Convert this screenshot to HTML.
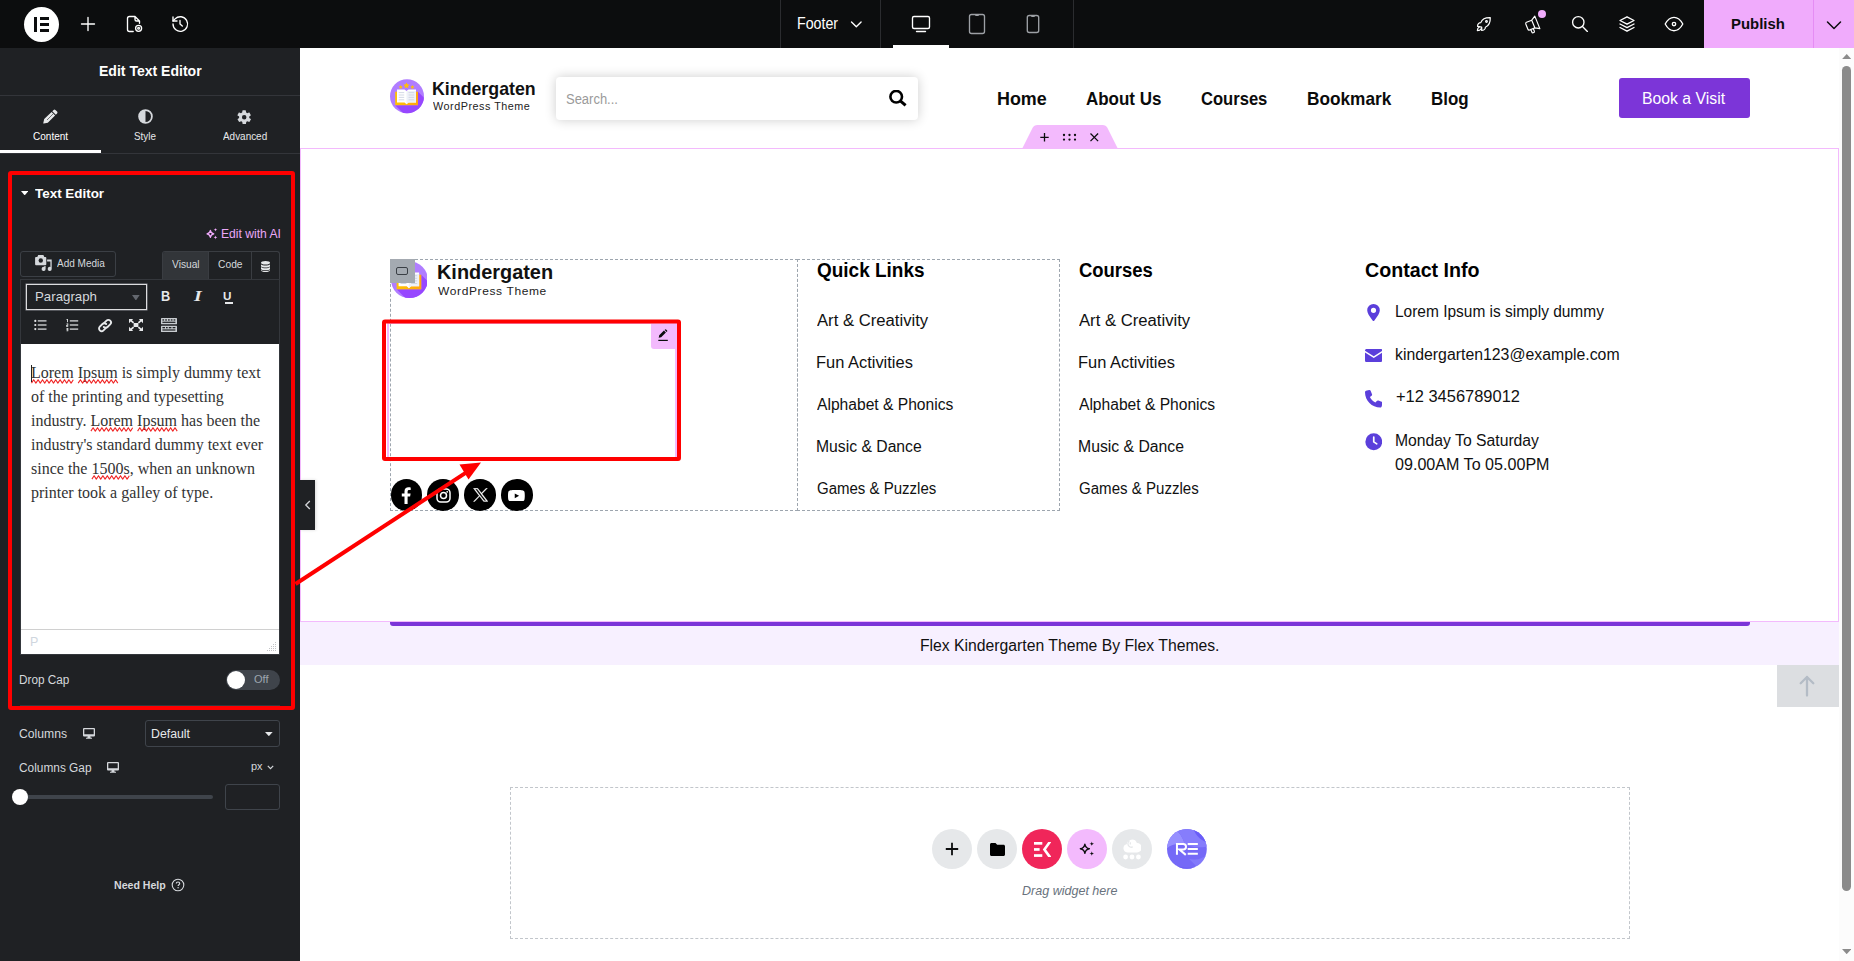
<!DOCTYPE html>
<html lang="en">
<head>
<meta charset="utf-8">
<title>Elementor | Footer</title>
<style>
*{box-sizing:border-box;margin:0;padding:0}
html,body{width:1854px;height:961px;overflow:hidden;background:#fff;font-family:"Liberation Sans",sans-serif}
.abs{position:absolute}
#app{position:relative;width:1854px;height:961px;overflow:hidden}
/* top bar */
#topbar{position:absolute;left:0;top:0;width:1854px;height:48px;background:#0c0d0e;color:#fff}
#topbar .sep{position:absolute;top:0;width:1px;height:48px;background:#2b2c2f}
#topbar svg{position:absolute;overflow:visible}
.tb-ic{fill:none;stroke:#fff;stroke-width:1.35;stroke-linecap:round;stroke-linejoin:round}
/* panel */
#panel{position:absolute;left:0;top:48px;width:300px;height:913px;background:#1f2124;color:#fff}
#panel .hline{position:absolute;left:0;width:300px;height:1px;background:#33353a}
.tablabel{position:absolute;top:82px;font-size:12px;line-height:14px;color:#e6e8ea;white-space:nowrap;transform-origin:0 0}
.lbl{position:absolute;font-size:12px;line-height:14px;color:#d5d8dc;white-space:nowrap;transform-origin:0 50%}
/* preview */
#preview{position:absolute;left:300px;top:48px;width:1554px;height:913px;background:#fff;overflow:hidden}
.lato{font-family:"Liberation Sans",sans-serif}
.t{position:absolute;white-space:nowrap;transform-origin:0 50%}
.sp{}
.nav{top:38px;font-size:18px;line-height:24px;font-weight:bold;color:#0b0b0b}
.fh{top:209px;font-size:20px;line-height:26px;font-weight:bold;color:#000}
.fl{font-size:16px;line-height:22px;color:#111}
.soc{position:absolute;top:431.200px;width:31.500px;height:31.500px;border-radius:50%;background:#000}
.cb{position:absolute;top:781px;width:40px;height:40px;border-radius:50%}
</style>
</head>
<body>
<div id="app">

<!-- ================= TOP BAR ================= -->
<div id="topbar">
  <!-- elementor logo -->
  <div class="abs" style="left:24px;top:7px;width:35px;height:35px;border-radius:50%;background:#fff"></div>
  <div class="abs" style="left:34px;top:17px;width:3px;height:14.5px;background:#0c0d0e"></div>
  <div class="abs" style="left:40px;top:17px;width:9px;height:3px;background:#0c0d0e"></div>
  <div class="abs" style="left:40px;top:22.7px;width:9px;height:3px;background:#0c0d0e"></div>
  <div class="abs" style="left:40px;top:28.5px;width:9px;height:3px;background:#0c0d0e"></div>
  <!-- plus -->
  <svg class="tb-ic" style="left:76px;top:12px" width="24" height="24" viewBox="0 0 24 24"><path d="M12 5.5v13M5.5 12h13"/></svg>
  <!-- doc settings -->
  <svg class="tb-ic" style="left:122px;top:12px" width="24" height="24" viewBox="0 0 24 24"><path d="M13 4.5H7.5a2 2 0 0 0-2 2v11a2 2 0 0 0 2 2h3.7M13 4.500l4.500 4.500v2.200M13 4.500v3a1.500 1.500 0 0 0 1.500 1.500h3"/><circle cx="16.600" cy="16.300" r="3"/><circle cx="16.600" cy="16.300" r="0.900"/></svg>
  <!-- history -->
  <svg class="tb-ic" style="left:168px;top:12px" width="24" height="24" viewBox="0 0 24 24"><path d="M5 12a7.300 7.300 0 1 0 2.100-5.100L5 9"/><path d="M5 5v4h4"/><path d="M12 8.500V12l2.300 2"/></svg>

  <div class="sep" style="left:780px"></div>
  <div class="sep" style="left:880px"></div>
  <div class="sep" style="left:1073px"></div>
  <div class="t" id="tb-footer" style="left:797.09px;top:14.00px;font-size:16.00px;line-height:20px;color:#fff;transform:scaleX(0.8888);transform-origin:0 50%">Footer</div>
  <svg class="tb-ic" style="left:846px;top:14px" width="20" height="20" viewBox="0 0 20 20"><path d="M5.500 8l4.800 4.800L15.100 8"/></svg>
  <!-- desktop -->
  <svg class="tb-ic" style="left:909px;top:12px" width="24" height="24" viewBox="0 0 24 24"><rect x="3.500" y="4.500" width="17" height="12" rx="1.500"/><path d="M7.500 19.500h9"/></svg>
  <div class="abs" style="left:893px;top:45px;width:56px;height:3px;background:#fff"></div>
  <!-- tablet -->
  <svg class="tb-ic" style="left:965px;top:12px;stroke:#9da0a5" width="24" height="24" viewBox="0 0 24 24"><rect x="4.500" y="2.500" width="15" height="19" rx="2"/><path d="M10.800 3.200h2.400"/></svg>
  <!-- mobile -->
  <svg class="tb-ic" style="left:1021px;top:12px;stroke:#9da0a5" width="24" height="24" viewBox="0 0 24 24"><rect x="6.300" y="3.500" width="11.400" height="17" rx="2"/><path d="M10.800 4.200h2.400"/></svg>

  <!-- rocket -->
  <svg class="tb-ic" style="left:1472px;top:12px" width="24" height="24" viewBox="0 0 24 24"><g transform="translate(12 12) scale(.92) translate(-12 -12)"><path d="M5 14.500c0-2 1.500-4 3.500-4 1-2.500 4-5.500 10.300-5.300.2 6.300-2.800 9.300-5.300 10.300 0 2-2 3.500-4 3.500v-3.500L5 14.500z"/><circle cx="14.700" cy="9.300" r="0.900"/><path d="M6.800 15.200c-1.500.8-2 2.500-2 4 1.500 0 3.200-.5 4-2"/></g></svg>
  <!-- megaphone -->
  <svg class="tb-ic" style="left:1520px;top:12px" width="24" height="24" viewBox="0 0 24 24"><g transform="translate(12 12.300) scale(.87) rotate(-22) translate(-12 -12)"><path d="M13.500 7.500v9.500M13.500 7.500l5-3v15.500l-5-3M13.500 7.500H7a1.500 1.500 0 0 0-1.500 1.500v6.500A1.500 1.500 0 0 0 7 17h6.500M8.500 17v3.500a1 1 0 0 0 1 1h1a1 1 0 0 0 1-1V17"/></g></svg>
  <div class="abs" style="left:1538px;top:10px;width:8px;height:8px;border-radius:50%;background:#f0abfc"></div>
  <!-- search -->
  <svg class="tb-ic" style="left:1568px;top:12px" width="24" height="24" viewBox="0 0 24 24"><circle cx="10.300" cy="10.300" r="5.700"/><path d="M14.500 14.500L19.400 19.400"/></svg>
  <!-- layers -->
  <svg class="tb-ic" style="left:1615px;top:12px" width="24" height="24" viewBox="0 0 24 24"><path d="M12 4.800l7 3.700-7 3.700-7-3.700 7-3.700z"/><path d="M5 12l7 3.700 7-3.700"/><path d="M5 15.500l7 3.700 7-3.700"/></svg>
  <!-- eye -->
  <svg class="tb-ic" style="left:1662px;top:12px" width="24" height="24" viewBox="0 0 24 24"><path d="M3.200 12c2.400-4.500 5.300-6.700 8.800-6.700s6.400 2.200 8.800 6.700c-2.400 4.500-5.300 6.700-8.800 6.700S5.600 16.500 3.200 12z"/><circle cx="12" cy="12" r="1.700"/></svg>
  <!-- publish -->
  <div class="abs" style="left:1704px;top:0;width:150px;height:48px;background:#f0abfc"></div>
  <div class="abs" style="left:1813px;top:0;width:1px;height:48px;background:#e58df4"></div>
  <div class="t" id="tb-publish" style="left:1731.27px;top:14.01px;font-size:15.50px;line-height:20px;font-weight:bold;color:#0c0d0e;transform:scaleX(0.9611);transform-origin:0 50%">Publish</div>
  <svg style="left:1822px;top:14px;fill:none;stroke:#0c0d0e;stroke-width:1.500;stroke-linecap:round;stroke-linejoin:round" width="24" height="24" viewBox="0 0 24 24"><path d="M5.500 8l6.500 6.500L18.500 8"/></svg>
</div>

<!-- ================= PANEL ================= -->
<div id="panel">
<!--PANEL-START-->
  <!-- header -->
  <div class="t" id="p-title" style="left:98.54px;top:13.01px;font-size:15.00px;line-height:20px;font-weight:bold;color:#fff;transform:scaleX(0.9355);transform-origin:0 50%">Edit Text Editor</div>
  <div class="hline" style="top:47px"></div>
  <!-- tabs -->
  <svg class="abs" style="left:43px;top:61px" width="15" height="15" viewBox="0 0 15 15"><path fill="#e6e8ea" d="M10.600.9a1.300 1.300 0 0 1 1.800 0l1.700 1.700a1.300 1.300 0 0 1 0 1.800l-1.300 1.300-3.500-3.500 1.300-1.300zM8.600 2.900l3.500 3.500-7.300 7.300-4 .9a.400.400 0 0 1-.5-.5l.9-4 7.400-7.200z"/><path stroke="#1f2124" stroke-width=".6" d="M4 11l6-6"/></svg>
  <svg class="abs" style="left:138px;top:61px" width="15" height="15" viewBox="0 0 15 15"><circle cx="7.500" cy="7.500" r="6.400" fill="none" stroke="#d5d8dc" stroke-width="1.800"/><path fill="#d5d8dc" d="M7.500.9a6.600 6.600 0 0 0 0 13.200z"/></svg>
  <svg class="abs" style="left:236.300px;top:60.500px" width="16.400" height="16.400" viewBox="0 0 24 24"><path fill="#d5d8dc" d="M19.400 13a7.600 7.600 0 0 0 0-2l2.100-1.600a.500.500 0 0 0 .1-.7l-2-3.400a.500.500 0 0 0-.6-.2l-2.500 1a7.300 7.300 0 0 0-1.700-1l-.4-2.600a.500.500 0 0 0-.5-.5h-4a.500.500 0 0 0-.5.500l-.4 2.600a7.300 7.300 0 0 0-1.700 1l-2.500-1a.500.500 0 0 0-.6.200l-2 3.400a.500.500 0 0 0 .1.700L4.600 11a7.600 7.600 0 0 0 0 2l-2.100 1.600a.500.500 0 0 0-.1.700l2 3.400c.1.200.4.300.6.200l2.500-1c.5.400 1.100.7 1.700 1l.4 2.600c0 .3.200.5.500.5h4c.3 0 .5-.2.500-.5l.4-2.600c.6-.300 1.200-.600 1.700-1l2.500 1c.2.100.5 0 .6-.2l2-3.400a.500.500 0 0 0-.1-.7L19.400 13zM12 15.300a3.300 3.300 0 1 1 0-6.600 3.300 3.300 0 0 1 0 6.600z"/></svg>
  <div class="tablabel" id="p-tab1" style="left:32.65px;color:#fff;font-size:11.50px;line-height:20px;top:78.01px;transform:scaleX(0.8720);transform-origin:0 50%">Content</div>
  <div class="tablabel" id="p-tab2" style="left:134.32px;font-size:11.50px;line-height:20px;top:78.01px;transform:scaleX(0.8571);transform-origin:0 50%">Style</div>
  <div class="tablabel" id="p-tab3" style="left:223.20px;font-size:11.50px;line-height:20px;top:78.01px;transform:scaleX(0.8634);transform-origin:0 50%">Advanced</div>
  <div class="abs" style="left:0;top:102px;width:101px;height:3px;background:#fff"></div>
  <div class="hline" style="top:105px"></div>

  <!-- section title -->
  <svg class="abs" style="left:21px;top:142.700px" width="7.400" height="4.400" viewBox="0 0 7.400 4.400"><path fill="#fff" d="M0 0h7.400L3.700 4.400z"/></svg>
  <div class="t" id="p-sect" style="left:34.80px;top:136.00px;font-size:13.00px;line-height:20px;font-weight:bold;color:#fff;transform:scaleX(1.0322);transform-origin:0 50%">Text Editor</div>

  <!-- edit with AI -->
  <svg class="abs" style="left:206px;top:179.500px" width="12" height="12" viewBox="0 0 12 12"><path fill="none" stroke="#f0abfc" stroke-width="1.250" stroke-linejoin="round" d="M4.400 2.300c.35 2.300 1.100 3.100 3.400 3.500-2.300.4-3.050 1.200-3.400 3.500-.35-2.300-1.100-3.100-3.400-3.500 2.300-.4 3.050-1.200 3.400-3.500z"/><path fill="#f0abfc" d="M9.500-.2c.2 1.300.6 1.700 1.900 1.900-1.300.2-1.700.6-1.900 1.900-.2-1.300-.6-1.700-1.900-1.900 1.300-.2 1.700-.6 1.900-1.900zM9.500 7.600c.2 1.300.6 1.700 1.900 1.900-1.300.2-1.700.6-1.900 1.900-.2-1.300-.6-1.700-1.900-1.900 1.300-.2 1.700-.6 1.900-1.900z"/></svg>
  <div class="t" id="p-ai" style="left:220.60px;top:176.01px;font-size:12.00px;line-height:20px;color:#eba8f8;transform:scaleX(1.0100);transform-origin:0 50%">Edit with AI</div>

  <!-- add media button -->
  <div class="abs" style="left:20px;top:203px;width:96px;height:26px;border:1px solid #3b3f45;border-radius:3px"></div>
  <svg class="abs" style="left:34.500px;top:207px" width="17" height="17" viewBox="0 0 17 17"><g fill="#d5d8dc"><path d="M9.300 4.400h7.400v9.500a2 2 0 1 1-1.300-1.870V6.500h-4.800v7.400a2 2 0 1 1-1.300-1.870z"/></g><path fill="#d5d8dc" stroke="#1f2124" stroke-width="1.600" paint-order="stroke" d="M3.200 0h5.200l.9 1.900h1.100c.5 0 .9.400.9.900v6.500c0 .5-.4.900-.9.900H1c-.5 0-.9-.4-.9-.9V2.800c0-.5.400-.9.900-.9h1.300z"/><circle cx="5.800" cy="5.500" r="2.200" fill="#1f2124"/></svg>
  <div class="t" id="p-addmedia" style="left:57.21px;top:205.01px;font-size:11.00px;line-height:20px;color:#d5d8dc;transform:scaleX(0.9104);transform-origin:0 50%">Add Media</div>

  <!-- editor tabs -->
  <div class="abs" style="left:162px;top:203px;width:118px;height:29px;border:1px solid #3a3d42;border-bottom:none;border-radius:3px 3px 0 0"></div>
  <div class="abs" style="left:163px;top:204px;width:45px;height:28px;background:#323539;border-radius:2px 0 0 0"></div>
  <div class="abs" style="left:208px;top:204px;width:1px;height:28px;background:#3a3d42"></div>
  <div class="abs" style="left:251px;top:204px;width:1px;height:28px;background:#3a3d42"></div>
  <div class="t" id="p-visual" style="left:172.19px;top:206.00px;font-size:11.00px;line-height:20px;color:#d5d8dc;transform:scaleX(0.9288);transform-origin:0 50%">Visual</div>
  <div class="t" id="p-code" style="left:217.63px;top:206.00px;font-size:11.00px;line-height:20px;color:#d5d8dc;transform:scaleX(0.9338);transform-origin:0 50%">Code</div>
  <svg class="abs" style="left:261px;top:212.500px" width="9" height="11" viewBox="0 0 9 11"><ellipse cx="4.500" cy="1.800" rx="4.500" ry="1.800" fill="#e6e8ea"/><path fill="#e6e8ea" d="M0 3.300c.8 1 2.500 1.300 4.500 1.300S8.200 4.300 9 3.300v1.900c-.8 1-2.500 1.300-4.500 1.300S.8 6.200 0 5.200zM0 6c.8 1 2.500 1.300 4.500 1.300S8.200 7 9 6v1.900c-.8 1-2.500 1.300-4.500 1.300S.8 8.900 0 7.900zM0 8.700c.8 1 2.500 1.300 4.500 1.300S8.200 9.700 9 8.700v.5C9 10.300 7 11 4.500 11S0 10.300 0 9.200z"/></svg>

  <!-- toolbar container -->
  <div class="abs" style="left:20px;top:231px;width:260px;height:376px;border:1px solid #34373c"></div>
  <div class="abs" style="left:26px;top:236px;width:121px;height:26px;border:1px solid #dcdcde;box-shadow:0 0 0 .5px #8a8d92"></div>
  <div class="t" id="p-para" style="left:35.16px;top:239.00px;font-size:13.00px;line-height:20px;color:#d5d8dc;transform:scaleX(1.0200);transform-origin:0 50%">Paragraph</div>
  <svg class="abs" style="left:132px;top:246.700px" width="7.700" height="5.600" viewBox="0 0 7.700 5.600"><path fill="#63676e" d="M0 0h7.700L3.850 5.600z"/></svg>
  <!-- B I U -->
  <div class="t" id="p-b" style="left:160.68px;top:238.01px;font-size:14.00px;line-height:20px;font-weight:bold;color:#e6e8ea;transform:scaleX(0.9108);transform-origin:0 50%">B</div>
  <div class="t" id="p-i" style="left:193.53px;top:238.00px;font-size:14.50px;line-height:20px;font-weight:bold;font-style:italic;font-family:'Liberation Serif',serif;color:#e6e8ea;transform:scaleX(1.3718);transform-origin:0 50%">I</div>
  <div class="t" id="p-u" style="left:223.27px;top:238.00px;font-size:11.50px;line-height:20px;font-weight:bold;color:#e6e8ea;transform:scaleX(1.0164);transform-origin:0 50%">U</div>
  <div class="abs" style="left:224.500px;top:254.300px;width:8.200px;height:1.300px;background:#e6e8ea"></div>
  <!-- row 2 icons -->
  <svg class="abs" style="left:34px;top:271px" width="13" height="12" viewBox="0 0 13 12"><g fill="#e6e8ea"><circle cx="1.300" cy="1.900" r="1.100"/><circle cx="1.300" cy="6" r="1.100"/><circle cx="1.300" cy="10.100" r="1.100"/><rect x="3.800" y="1.300" width="8.700" height="1.200"/><rect x="3.800" y="5.400" width="8.700" height="1.200"/><rect x="3.800" y="9.500" width="8.700" height="1.200"/></g></svg>
  <svg class="abs" style="left:66px;top:270px" width="13" height="14" viewBox="0 0 13 14"><g fill="#e6e8ea"><rect x="3.800" y="2.300" width="8.400" height="1.200"/><rect x="3.800" y="6.400" width="8.400" height="1.200"/><rect x="3.800" y="10.500" width="8.400" height="1.200"/><rect x="1" y="1" width=".9" height="3.200"/><rect x=".4" y="1.300" width="1" height=".7"/><rect x=".4" y="5.600" width="1.800" height=".7"/><rect x="1.400" y="5.600" width=".8" height="1.800"/><rect x=".4" y="7" width="1.800" height=".7"/><rect x=".4" y="7" width=".8" height="1.700"/><rect x=".4" y="8.200" width="1.800" height=".7"/><rect x=".4" y="10" width="1.800" height=".7"/><rect x="1.400" y="10" width=".8" height="3.100"/><rect x=".4" y="11.200" width="1.800" height=".7"/><rect x=".4" y="12.500" width="1.800" height=".7"/></g></svg>
  <svg class="abs" style="left:96.500px;top:269.500px" width="16" height="15" viewBox="0 0 16 15"><g fill="none" stroke="#e6e8ea" stroke-width="1.900" stroke-linecap="round"><path d="M7.200 4.900l2.300-2.300a2.600 2.600 0 0 1 3.700 3.700l-2.700 2.700a2.600 2.600 0 0 1-3.700 0"/><path d="M8.800 10.100l-2.300 2.300a2.600 2.600 0 0 1-3.700-3.700l2.700-2.700a2.600 2.600 0 0 1 3.700 0"/></g></svg>
  <svg class="abs" style="left:129px;top:271px" width="14" height="12" viewBox="0 0 14 12"><g fill="#e6e8ea"><path d="M0 0h4.200L2.900 1.300l2.300 2-1.200 1.200-2.300-2L0 4.200zM14 0v4.200l-1.700-1.700-2.300 2-1.200-1.200 2.300-2L9.800 0zM0 12V7.800l1.700 1.700 2.300-2 1.200 1.200-2.300 2L4.200 12zM14 12H9.800l1.300-1.300-2.300-2 1.200-1.200 2.300 2L14 7.800z"/><rect x="4.600" y="4" width="4.800" height="4"/></g></svg>
  <svg class="abs" style="left:160.500px;top:270px" width="16" height="14" viewBox="0 0 16 14"><g fill="#c8ccd0"><rect x="0" y="0" width="16" height="6.300" rx=".6"/><rect x="0" y="7.700" width="16" height="6.300" rx=".6"/></g><g fill="#1f2124"><rect x="1.400" y="1.300" width="1.700" height="1.300"/><rect x="4.200" y="1.300" width="1.700" height="1.300"/><rect x="7" y="1.300" width="1.700" height="1.300"/><rect x="9.800" y="1.300" width="1.700" height="1.300"/><rect x="12.600" y="1.300" width="1.700" height="1.300"/><rect x="1.400" y="3.700" width="13" height="1.200"/><rect x="1.400" y="9" width="2.600" height="1.300"/><rect x="5" y="9" width="1.700" height="1.300"/><rect x="7.800" y="9" width="2.600" height="1.300"/><rect x="11.600" y="9" width="2.800" height="1.300"/><rect x="1.400" y="11.400" width="13" height="1.200"/></g></svg>

  <!-- editor body -->
  <div class="abs" style="left:21px;top:296px;width:258px;height:310px;background:#fff"></div>
  <div class="abs" id="p-body" style="left:31px;top:313px;width:240px;font-family:'Liberation Serif',serif;font-size:16px;line-height:24px;color:#333">
    <span class="sp">Lorem</span> <span class="sp">Ipsum</span> is simply dummy text<br>of the printing and typesetting<br>industry. <span class="sp">Lorem</span> <span class="sp">Ipsum</span> has been the<br>industry's standard dummy text ever<br>since the <span class="sp">1500s</span>, when an unknown<br>printer took a galley of type.
  </div>
<svg class="abs" id="squig" style="left:0;top:0;overflow:visible" width="300" height="700" viewBox="0 0 300 700"><path fill="none" stroke="#f02626" stroke-width="1.1" stroke-linejoin="round" d="M31.5 335.1L33.7 331.7L35.9 335.1L38.1 331.7L40.3 335.1L42.5 331.7L44.7 335.1L46.9 331.7L49.1 335.1L51.3 331.7L53.5 335.1L55.7 331.7L57.9 335.1L60.1 331.7L62.3 335.1L64.5 331.7L66.7 335.1L68.9 331.7L71.1 335.1L73.3 331.7 M78.2 335.1L80.4 331.7L82.6 335.1L84.8 331.7L87.0 335.1L89.2 331.7L91.4 335.1L93.6 331.7L95.8 335.1L98.0 331.7L100.2 335.1L102.4 331.7L104.6 335.1L106.8 331.7L109.0 335.1L111.2 331.7L113.4 335.1L115.6 331.7L117.8 335.1 M90.9 383.1L93.1 379.7L95.3 383.1L97.5 379.7L99.7 383.1L101.9 379.7L104.1 383.1L106.3 379.7L108.5 383.1L110.7 379.7L112.9 383.1L115.1 379.7L117.3 383.1L119.5 379.7L121.7 383.1L123.9 379.7L126.1 383.1L128.3 379.7L130.5 383.1L132.7 379.7 M137.6 383.1L139.8 379.7L142.0 383.1L144.2 379.7L146.4 383.1L148.6 379.7L150.8 383.1L153.0 379.7L155.2 383.1L157.4 379.7L159.6 383.1L161.8 379.7L164.0 383.1L166.2 379.7L168.4 383.1L170.6 379.7L172.8 383.1L175.0 379.7L177.2 383.1 M91.9 431.1L94.1 427.7L96.3 431.1L98.5 427.7L100.7 431.1L102.9 427.7L105.1 431.1L107.3 427.7L109.5 431.1L111.7 427.7L113.9 431.1L116.1 427.7L118.3 431.1L120.5 427.7L122.7 431.1L124.9 427.7L127.1 431.1L129.3 427.7"/></svg>
  <div class="abs" style="left:31px;top:317px;width:1px;height:17px;background:#222"></div>
  <div class="abs" style="left:21px;top:581px;width:258px;height:1px;background:#d0d0d0"></div>
  <div class="t" id="p-p" style="left:30.40px;top:584.01px;font-size:12.00px;line-height:20px;color:#cfd6de;transform:scaleX(1.0371);transform-origin:0 50%">P</div>
  <svg class="abs" style="left:266px;top:593px" width="11" height="11" viewBox="0 0 11 11"><g fill="#c3c4c7"><rect x="9" y="1" width="1" height="1"/><rect x="7" y="3" width="1" height="1"/><rect x="9" y="3" width="1" height="1"/><rect x="5" y="5" width="1" height="1"/><rect x="7" y="5" width="1" height="1"/><rect x="9" y="5" width="1" height="1"/><rect x="3" y="7" width="1" height="1"/><rect x="5" y="7" width="1" height="1"/><rect x="7" y="7" width="1" height="1"/><rect x="9" y="7" width="1" height="1"/><rect x="1" y="9" width="1" height="1"/><rect x="3" y="9" width="1" height="1"/><rect x="5" y="9" width="1" height="1"/><rect x="7" y="9" width="1" height="1"/><rect x="9" y="9" width="1" height="1"/></g></svg>

  <!-- drop cap -->
  <div class="lbl" id="p-dropcap" style="left:19.41px;top:622.01px;font-size:12.00px;line-height:20px;transform:scaleX(0.9815);transform-origin:0 50%">Drop Cap</div>
  <div class="abs" style="left:226px;top:622px;width:54px;height:20px;border-radius:10px;background:#3f444b"></div>
  <div class="abs" style="left:226.500px;top:623px;width:18px;height:18px;border-radius:50%;background:#fff"></div>
  <div class="t" id="p-off" style="left:253.61px;top:621.01px;font-size:11.00px;line-height:20px;color:#9da5ae;transform:scaleX(1.0049);transform-origin:0 50%">Off</div>
  <div class="abs" style="left:20px;top:657px;width:260px;height:1px;background:#34373c"></div>

  <!-- columns -->
  <div class="lbl" id="p-columns" style="left:19.34px;top:676.01px;font-size:12.00px;line-height:20px;transform:scaleX(1.0156);transform-origin:0 50%">Columns</div>
  <svg class="abs" style="left:83px;top:680px" width="12" height="11" viewBox="0 0 12 11"><path fill="#d5d8dc" d="M1 0h10a1 1 0 0 1 1 1v6.500a1 1 0 0 1-1 1H7.300l.4 1.300H9v.9H3v-.9h1.300l.4-1.300H1a1 1 0 0 1-1-1V1a1 1 0 0 1 1-1zm.3 1.300v5h9.400v-5z"/></svg>
  <div class="abs" style="left:145px;top:672px;width:135px;height:27px;border:1px solid #3f444b;border-radius:3px"></div>
  <div class="t" id="p-default" style="left:150.58px;top:676.01px;font-size:12.00px;line-height:20px;color:#e6e8ea;transform:scaleX(1.0263);transform-origin:0 50%">Default</div>
  <svg class="abs" style="left:265.300px;top:684px" width="7.700" height="4.200" viewBox="0 0 7.700 4.200"><path fill="#e6e8ea" d="M0 0h7.700L3.850 4.200z"/></svg>

  <!-- columns gap -->
  <div class="lbl" id="p-colgap" style="left:19.35px;top:710.01px;font-size:12.00px;line-height:20px;transform:scaleX(0.9887);transform-origin:0 50%">Columns Gap</div>
  <svg class="abs" style="left:107px;top:714px" width="12" height="11" viewBox="0 0 12 11"><path fill="#d5d8dc" d="M1 0h10a1 1 0 0 1 1 1v6.500a1 1 0 0 1-1 1H7.300l.4 1.300H9v.9H3v-.9h1.300l.4-1.300H1a1 1 0 0 1-1-1V1a1 1 0 0 1 1-1zm.3 1.300v5h9.400v-5z"/></svg>
  <div class="t" id="p-px" style="left:251.23px;top:708.01px;font-size:11.00px;line-height:20px;color:#d5d8dc;transform:scaleX(0.9978);transform-origin:0 50%">px</div>
  <svg class="abs" style="left:267px;top:717px" width="7" height="5" viewBox="0 0 7 5"><path fill="none" stroke="#d5d8dc" stroke-width="1.200" d="M.8.900l2.700 2.700L6.200.9"/></svg>
  <div class="abs" style="left:22px;top:747px;width:191px;height:4px;border-radius:2px;background:#3f444b"></div>
  <div class="abs" style="left:11.500px;top:740.700px;width:16.500px;height:16.500px;border-radius:50%;background:#fff"></div>
  <div class="abs" style="left:225px;top:736px;width:55px;height:26px;border:1px solid #3f444b;border-radius:3px"></div>

  <!-- need help -->
  <div class="t" id="p-help" style="left:114.21px;top:827.00px;font-size:11.00px;line-height:20px;font-weight:bold;color:#d5d8dc;transform:scaleX(0.9625);transform-origin:0 50%">Need Help</div>
  <svg class="abs" style="left:170.800px;top:830.300px" width="14" height="14" viewBox="0 0 14 14"><circle cx="7" cy="7" r="5.800" fill="none" stroke="#d5d8dc" stroke-width="1.100"/><path fill="none" stroke="#d5d8dc" stroke-width="1.200" d="M5.300 5.600c0-1 .8-1.600 1.700-1.600s1.700.6 1.700 1.500c0 1.200-1.600 1.300-1.600 2.600"/><rect x="6.500" y="9.100" width="1.200" height="1.200" fill="#d5d8dc"/></svg>
<!--PANEL-END-->
</div>

<!-- ================= PREVIEW ================= -->
<div id="preview">
<!--PREVIEW-START-->
  <!-- coordinates inside #preview are page coords minus (300,48) -->
  <!-- site header -->
  <svg class="abs" style="left:90px;top:30.500px" width="34" height="35" viewBox="0 0 34 35"><defs><clipPath id="lc1"><circle cx="17" cy="17.250" r="17"/></clipPath><linearGradient id="ly1" x1="0" y1="0" x2="1" y2="0"><stop offset="0" stop-color="#ffc400"/><stop offset="1" stop-color="#ffa412"/></linearGradient></defs><circle cx="17" cy="17.250" r="17" fill="#b07dff"/><g clip-path="url(#lc1)"><path fill="#9747ff" d="M28 12.700L46 30.700V46H25L5.200 26.200H28z"/></g><rect x="5.200" y="12.700" width="22.800" height="13.500" fill="url(#ly1)"/><path fill="#fff" d="M7 10.600h7.500l2 1.400 2-1.400H26V23.400h-7.500l-2 1.900-2-1.900H7z"/><path fill="#eef1f8" d="M16.500 12H26v11.400h-7.500l-2 1.900z"/><g stroke="#cfd5e3" stroke-width=".9"><path d="M8.800 13.600h5.400M8.800 16h5.400M8.800 18.400h5.400M8.800 20.800h5.400M18.600 13.600h5.600M18.600 16h5.600M18.600 18.400h5.600M18.600 20.800h5.600"/></g><g fill="#ffbe0b"><path d="M16.500 3.400l.95 1.950 2.150.3-1.550 1.500.37 2.150-1.920-1.020-1.920 1.020.37-2.150-1.550-1.500 2.150-.3z"/><path d="M10.700 6l.62 1.250 1.380.2-1 .97.240 1.380-1.240-.65-1.240.65.240-1.380-1-.97 1.380-.2z"/><path d="M22.400 6l.62 1.250 1.380.2-1 .97.240 1.380-1.240-.65-1.240.65.240-1.380-1-.97 1.380-.2z"/></g></svg>
  <div class="t lato" id="h-kg" style="left:132.35px;top:31.01px;font-size:19.00px;line-height:20px;font-weight:bold;color:#111;transform:scaleX(0.9355);transform-origin:0 50%">Kindergaten</div>
  <div class="t lato" id="h-wp" style="left:133.04px;top:48.00px;font-size:10.50px;line-height:20px;letter-spacing:.5px;color:#222;transform:scaleX(1.0284);transform-origin:0 50%">WordPress Theme</div>
  <div class="abs" style="left:256px;top:29px;width:362px;height:43px;background:#fff;border-radius:4px;box-shadow:0 0 12px rgba(0,0,0,.2)"></div>
  <div class="t lato" id="h-search" style="left:266.38px;top:41.01px;font-size:14.00px;line-height:20px;color:#9a9a9a;transform:scaleX(0.9270);transform-origin:0 50%">Search...</div>
  <svg class="abs" style="left:589px;top:42px" width="18" height="17" viewBox="0 0 18 17"><circle cx="7.200" cy="6.700" r="5.800" fill="none" stroke="#000" stroke-width="2.600"/><path stroke="#000" stroke-width="3" stroke-linecap="butt" d="M11.300 10.800l5.300 4.600"/></svg>
  <div class="t lato nav" id="h-n1" style="left:697.49px;font-size:18.50px;line-height:20px;top:41.01px;transform:scaleX(0.9678);transform-origin:0 50%">Home</div>
  <div class="t lato nav" id="h-n2" style="left:786.36px;font-size:18.50px;line-height:20px;top:41.01px;transform:scaleX(0.9171);transform-origin:0 50%">About Us</div>
  <div class="t lato nav" id="h-n3" style="left:901.08px;font-size:18.50px;line-height:20px;top:41.01px;transform:scaleX(0.8961);transform-origin:0 50%">Courses</div>
  <div class="t lato nav" id="h-n4" style="left:1006.63px;font-size:18.50px;line-height:20px;top:41.01px;transform:scaleX(0.9321);transform-origin:0 50%">Bookmark</div>
  <div class="t lato nav" id="h-n5" style="left:1130.66px;font-size:18.50px;line-height:20px;top:41.01px;transform:scaleX(0.9146);transform-origin:0 50%">Blog</div>
  <div class="abs" style="left:1319px;top:30px;width:131px;height:40px;background:#7c35d8;border-radius:3px"></div>
  <div class="t lato" id="h-book" style="left:1342.03px;top:41.01px;font-size:16.00px;line-height:20px;color:#fff;transform:scaleX(0.9863);transform-origin:0 50%">Book a Visit</div>

  <!-- section handle -->
  <svg class="abs" style="left:722px;top:77px" width="96" height="24" viewBox="0 0 96 24"><path fill="#f3bafd" d="M0 24L10.500 3Q12 0 15.500 0H80.500Q84 0 85.500 3L96 24z"/><path stroke="#0c0d0e" stroke-width="1.300" d="M22.500 8.100v8.400M18.300 12.300h8.400"/><g fill="#0c0d0e"><circle cx="42" cy="10" r="1.150"/><circle cx="47.500" cy="10" r="1.150"/><circle cx="53" cy="10" r="1.150"/><circle cx="42" cy="14.600" r="1.150"/><circle cx="47.500" cy="14.600" r="1.150"/><circle cx="53" cy="14.600" r="1.150"/></g><path stroke="#0c0d0e" stroke-width="1.300" d="M68.500 8.500l7.600 7.600M76.100 8.500l-7.600 7.600"/></svg>
  <!-- section outline -->
  <div class="abs" style="left:0;top:100px;width:1539px;height:474px;border:1px solid #f3bafd"></div>

  <!-- footer col 1 -->
  <div class="abs" style="left:90px;top:211px;width:408px;height:252px;border:1px dashed #9da5ae"></div>
  <div class="abs" style="left:497px;top:211px;width:263px;height:252px;border:1px dashed #9da5ae"></div>
  <svg class="abs" style="left:90.600px;top:213.300px" width="36.800" height="37.300" viewBox="0 0 34 34.500"><defs><clipPath id="lc2"><circle cx="17" cy="17.250" r="17"/></clipPath></defs><circle cx="17" cy="17.250" r="17" fill="#b07dff"/><g clip-path="url(#lc2)"><path fill="#9747ff" d="M28 12.700L46 30.700V46H25L5.200 26.200H28z"/></g><rect x="5.200" y="12.700" width="22.800" height="13.500" fill="url(#ly1)"/><path fill="#fff" d="M7 10.600h7.500l2 1.400 2-1.400H26V23.400h-7.500l-2 1.900-2-1.900H7z"/><path fill="#eef1f8" d="M16.500 12H26v11.400h-7.500l-2 1.900z"/><g stroke="#cfd5e3" stroke-width=".9"><path d="M8.800 13.600h5.400M8.800 16h5.400M8.800 18.400h5.400M8.800 20.800h5.400M18.600 13.600h5.600M18.600 16h5.600M18.600 18.400h5.600M18.600 20.800h5.600"/></g></svg>
  <div class="abs" style="left:90px;top:211px;width:25px;height:24px;background:#a4aab1"></div>
  <div class="abs" style="left:96.300px;top:219px;width:11.700px;height:8px;border:1.300px solid #3a3f45;border-radius:2px"></div>
  <div class="t lato" id="f-kg" style="left:136.99px;top:214.00px;font-size:21.00px;line-height:20px;font-weight:bold;color:#111;transform:scaleX(0.9471);transform-origin:0 50%">Kindergaten</div>
  <div class="t lato" id="f-wp" style="left:138.19px;top:233.00px;font-size:11.50px;line-height:20px;letter-spacing:.6px;color:#222;transform:scaleX(1.0424);transform-origin:0 50%">WordPress Theme</div>
  <!-- selected widget -->
  <div class="abs" style="left:87px;top:274px;width:290px;height:137px;border:2px solid #f3bafd"></div>
  <div class="abs" style="left:351px;top:276px;width:25.500px;height:25px;background:#f3bafd;border-radius:0 0 0 3px"></div>
  <svg class="abs" style="left:357px;top:281px" width="13" height="13" viewBox="0 0 13 13"><path fill="#0c0d0e" d="M8.200 1.300l2.300 2.300-5.600 5.600-2.900.6.600-2.900zM9 .6l.6-.6a.8.800 0 0 1 1.100 0l1.200 1.200a.8.800 0 0 1 0 1.100l-.6.600z" transform="translate(0 .5) scale(.85)"/><rect x="1.300" y="10.800" width="9.500" height="1.200" fill="#0c0d0e"/></svg>
  <!-- social -->
  <div class="soc" style="left:90.500px"></div><div class="soc" style="left:127.400px"></div><div class="soc" style="left:164.300px"></div><div class="soc" style="left:201.200px"></div>
  <svg class="abs" style="left:100px;top:439px" width="12" height="17" viewBox="0 0 12 17"><path fill="#fff" d="M7.600 17V9.600h2.500l.5-3H7.600V4.700c0-.9.400-1.600 1.700-1.600h1.400V.5C10.400.4 9.500.3 8.500.3 6.100.3 4.500 1.700 4.500 4.300v2.300H1.800v3h2.700V17z"/></svg>
  <svg class="abs" style="left:135.500px;top:439.500px" width="15" height="15" viewBox="0 0 15 15"><rect x="1" y="1" width="13" height="13" rx="3.700" fill="none" stroke="#fff" stroke-width="1.500"/><circle cx="7.500" cy="7.500" r="3" fill="none" stroke="#fff" stroke-width="1.500"/><circle cx="11.200" cy="3.800" r=".9" fill="#fff"/></svg>
  <svg class="abs" style="left:172.500px;top:440.200px" width="15.200" height="13.800" viewBox="0 0 16 16" preserveAspectRatio="none"><path fill="#fff" stroke="#fff" stroke-width=".35" d="M9.500 6.800L15.200.3h-1.400L8.900 5.900 5 .3H.4l6 8.600-6 6.800h1.400l5.200-6 4.200 6h4.600zM7.700 8.900l-.6-.9L2.300 1.300h2.100l3.900 5.500.6.900 5 7.100h-2.100z"/></svg>
  <svg class="abs" style="left:208.300px;top:441.800px" width="16.800" height="11.600" viewBox="0 0 19 14" preserveAspectRatio="none"><path fill="#fff" d="M18.600 2.200A2.400 2.400 0 0 0 16.900.5C15.400.1 9.500.1 9.500.1s-5.900 0-7.400.4A2.400 2.400 0 0 0 .4 2.200C0 3.700 0 7 0 7s0 3.300.4 4.800c.2.800.9 1.500 1.700 1.700 1.500.4 7.400.4 7.400.4s5.900 0 7.400-.4a2.400 2.400 0 0 0 1.700-1.700c.4-1.500.4-4.800.4-4.800s0-3.300-.4-4.800z"/><path fill="#000" d="M7.600 9.900V4.100l5 2.900z"/></svg>

  <!-- quick links -->
  <div class="t lato fh" id="f-h1" style="left:516.83px;font-size:20.00px;line-height:20px;top:212.00px;transform:scaleX(0.9486);transform-origin:0 50%">Quick Links</div>
  <div class="t lato fl" id="f-a1" style="left:517.43px;top:263.01px;font-size:16.00px;line-height:20px;transform:scaleX(1.0418);transform-origin:0 50%">Art &amp; Creativity</div>
  <div class="t lato fl" id="f-a2" style="left:516.17px;top:305.01px;font-size:16.00px;line-height:20px;transform:scaleX(1.0275);transform-origin:0 50%">Fun Activities</div>
  <div class="t lato fl" id="f-a3" style="left:517.44px;top:347.01px;font-size:16.00px;line-height:20px;transform:scaleX(0.9762);transform-origin:0 50%">Alphabet &amp; Phonics</div>
  <div class="t lato fl" id="f-a4" style="left:516.31px;top:389.01px;font-size:16.00px;line-height:20px;transform:scaleX(0.9826);transform-origin:0 50%">Music &amp; Dance</div>
  <div class="t lato fl" id="f-a5" style="left:516.87px;top:431.01px;font-size:16.00px;line-height:20px;transform:scaleX(0.9381);transform-origin:0 50%">Games &amp; Puzzles</div>
  <!-- courses -->
  <div class="t lato fh" id="f-h2" style="left:779.28px;font-size:20.00px;line-height:20px;top:212.00px;transform:scaleX(0.9227);transform-origin:0 50%">Courses</div>
  <div class="t lato fl" id="f-b1" style="left:779.20px;top:263.01px;font-size:16.00px;line-height:20px;transform:scaleX(1.0416);transform-origin:0 50%">Art &amp; Creativity</div>
  <div class="t lato fl" id="f-b2" style="left:777.94px;top:305.01px;font-size:16.00px;line-height:20px;transform:scaleX(1.0278);transform-origin:0 50%">Fun Activities</div>
  <div class="t lato fl" id="f-b3" style="left:779.21px;top:347.01px;font-size:16.00px;line-height:20px;transform:scaleX(0.9751);transform-origin:0 50%">Alphabet &amp; Phonics</div>
  <div class="t lato fl" id="f-b4" style="left:778.08px;top:389.01px;font-size:16.00px;line-height:20px;transform:scaleX(0.9848);transform-origin:0 50%">Music &amp; Dance</div>
  <div class="t lato fl" id="f-b5" style="left:778.67px;top:431.01px;font-size:16.00px;line-height:20px;transform:scaleX(0.9417);transform-origin:0 50%">Games &amp; Puzzles</div>
  <!-- contact -->
  <div class="t lato fh" id="f-h3" style="left:1064.80px;font-size:20.00px;line-height:20px;top:212.00px;transform:scaleX(0.9822);transform-origin:0 50%">Contact Info</div>
  <svg class="abs" style="left:1067px;top:256px" width="13" height="17" viewBox="0 0 13 17"><path fill="#5b3fdb" d="M6.500 0a6.300 6.300 0 0 1 6.300 6.300c0 2.600-2 5.700-5.400 10.200a1.100 1.100 0 0 1-1.800 0C2.200 12 .2 8.900.2 6.300A6.300 6.300 0 0 1 6.500 0zm0 3.700a2.600 2.600 0 1 0 0 5.200 2.600 2.600 0 0 0 0-5.200z"/></svg>
  <svg class="abs" style="left:1064.800px;top:301.300px" width="17.500" height="13" viewBox="0 0 17.500 13"><path fill="#5b3fdb" d="M1.600 0h14.300c.9 0 1.600.7 1.600 1.600v.2L8.750 7.200 0 1.800v-.2C0 .7.700 0 1.600 0zM0 3.500l8.750 5.400 8.750-5.400v7.900c0 .9-.7 1.600-1.600 1.600H1.600C.7 13 0 12.300 0 11.400z"/></svg>
  <svg class="abs" style="left:1064.800px;top:342px" width="17.500" height="17.500" viewBox="0 0 512 512"><path fill="#5b3fdb" d="M164.900 24.600c-7.700-18.600-28-28.500-47.400-23.200l-88 24C12.100 30.200 0 46 0 64c0 247.400 200.600 448 448 448 18 0 33.800-12.100 38.600-29.500l24-88c5.300-19.400-4.600-39.700-23.200-47.400l-96-40c-16.300-6.800-35.200-2.100-46.300 11.600L304.700 368c-70.400-33.300-127.400-90.300-160.700-160.700l49.300-40.300c13.700-11.200 18.400-30 11.600-46.300l-40-96z"/></svg>
  <svg class="abs" style="left:1064.800px;top:385px" width="17.500" height="17.500" viewBox="0 0 17.500 17.500"><circle cx="8.750" cy="8.750" r="8.400" fill="#5b3fdb"/><path fill="none" stroke="#fff" stroke-width="1.700" stroke-linecap="round" stroke-linejoin="round" d="M8.750 4.200v4.700l3 2"/></svg>
  <div class="t lato fl" id="f-c1" style="left:1095.13px;top:254.00px;font-size:16.00px;line-height:20px;transform:scaleX(0.9668);transform-origin:0 50%">Lorem Ipsum is simply dummy</div>
  <div class="t lato fl" id="f-c2" style="left:1095.13px;top:297.00px;font-size:16.00px;line-height:20px;transform:scaleX(0.9892);transform-origin:0 50%">kindergarten123@example.com</div>
  <div class="t lato fl" id="f-c3" style="left:1095.86px;top:339.01px;font-size:16.00px;line-height:20px;transform:scaleX(1.0278);transform-origin:0 50%">+12 3456789012</div>
  <div class="t lato fl" id="f-c4" style="left:1095.06px;top:383.00px;font-size:16.00px;line-height:20px;transform:scaleX(0.9831);transform-origin:0 50%">Monday To Saturday</div>
  <div class="t lato fl" id="f-c5" style="left:1095.22px;top:407.00px;font-size:16.00px;line-height:20px;transform:scaleX(1.0062);transform-origin:0 50%">09.00AM To 05.00PM</div>

  <!-- copyright strip -->
  <div class="abs" style="left:0;top:574px;width:1539px;height:43px;background:#f7f0ff"></div>
  <div class="abs" style="left:90px;top:573.500px;width:1360px;height:4.500px;background:#7c35d8;border-radius:0 0 3px 3px"></div>
  <div class="t" id="f-copy" style="left:620.07px;top:588.00px;font-size:16.00px;line-height:20px;color:#111;transform:scaleX(0.9838);transform-origin:0 50%">Flex Kindergarten Theme By Flex Themes.</div>
  <!-- scroll top -->
  <div class="abs" style="left:1477px;top:617px;width:62px;height:42px;background:#dcdee1"></div>
  <svg class="abs" style="left:1499px;top:627px" width="16" height="22" viewBox="0 0 16 22"><path fill="none" stroke="#b4bcc6" stroke-width="2.300" stroke-linecap="round" stroke-linejoin="round" d="M8 20.500V2M1.700 8.300L8 2l6.300 6.300"/></svg>

  <!-- drop zone -->
  <div class="abs" style="left:210px;top:739px;width:1120px;height:152px;border:1px dashed #c2c6cb"></div>
  <div class="cb" style="left:632px;background:#e6e8ea"></div>
  <div class="cb" style="left:677px;background:#e6e8ea"></div>
  <div class="cb" style="left:722px;background:#f0265a"></div>
  <div class="cb" style="left:767px;background:#f3bafd"></div>
  <div class="cb" style="left:812px;background:#e6e8ea"></div>
  <svg class="abs" style="left:867.200px;top:781px" width="39.800" height="39.800" viewBox="0 0 40 40"><defs><clipPath id="cp3"><circle cx="20" cy="20" r="20"/></clipPath></defs><circle cx="20" cy="20" r="20" fill="#7569f7"/><g clip-path="url(#cp3)"><path fill="#9790ff" d="M-2 22C2 15 12 14 18 16 16 8 12 3 8 0H-2z"/><path fill="#867dfc" d="M8 0c4 3 8 8 10 16 6 1.500 14 4 24 1V-2H8z"/><path fill="#6a5df8" d="M26-2c2 8 8 14 16 16V-2z"/><path fill="#6b5ff5" d="M-2 30c8 8 22 12 44 6v8H-2z"/><path fill="#8880fc" d="M22 30c8 2 14 0 20-6v14H30z" opacity=".7"/></g><g fill="none" stroke="#fff" stroke-width="2"><path d="M10 26V15.100h6.300a2.800 2.800 0 0 1 0 5.600h-3.800l6.400 5.300"/><path d="M20.800 15.100H31M20.800 20H31M20.800 24.900H31"/></g></svg>
  <svg class="abs" style="left:645px;top:794px" width="14" height="14" viewBox="0 0 14 14"><path stroke="#0c0d0e" stroke-width="1.800" d="M7 .8v12.400M.8 7h12.400"/></svg>
  <svg class="abs" style="left:689.500px;top:794.500px" width="15" height="13" viewBox="0 0 15 13"><path fill="#000" d="M1.500 0h4l1.700 1.800h6.300c.8 0 1.500.7 1.500 1.500v8.200c0 .8-.7 1.500-1.500 1.500h-12C.7 13 0 12.300 0 11.500v-10C0 .7.700 0 1.500 0z"/></svg>
  <svg class="abs" style="left:734px;top:793.800px" width="17" height="15" viewBox="0 0 17 15"><g fill="#fff"><rect x="0" y="0" width="8.300" height="2.700"/><rect x="0" y="6.100" width="5.600" height="2.700"/><rect x="0" y="12.200" width="8.300" height="2.700"/><path d="M14.200 0h3.200l-5.400 7.450 5.400 7.450h-3.200L8.800 7.450z"/></g></svg>
  <svg class="abs" style="left:779px;top:793px" width="16" height="16" viewBox="0 0 12 12"><path fill="none" stroke="#0c0d0e" stroke-width="1" stroke-linejoin="round" d="M4.400 2.300c.35 2.300 1.100 3.100 3.400 3.500-2.300.4-3.050 1.200-3.400 3.500-.35-2.300-1.100-3.100-3.400-3.500 2.300-.4 3.050-1.200 3.400-3.500z"/><path fill="#0c0d0e" d="M9.600.3c.2 1.200.55 1.550 1.750 1.750-1.200.2-1.550.55-1.750 1.750-.2-1.200-.55-1.550-1.750-1.750 1.200-.2 1.550-.55 1.750-1.750zM9.600 7.700c.2 1.200.55 1.550 1.750 1.750-1.200.2-1.550.55-1.750 1.750-.2-1.200-.55-1.550-1.750-1.750 1.200-.2 1.550-.55 1.750-1.750z"/></svg>
  <svg class="abs" style="left:823px;top:790px" width="18" height="22" viewBox="0 0 18 22"><g fill="#fff"><path d="M4.300 14.400a4.100 4.100 0 0 1-.6-8.100A5.300 5.300 0 0 1 13.900 5a4.700 4.700 0 0 1 .2 9.400z"/><circle cx="2.600" cy="19" r="2.400"/><circle cx="9" cy="19" r="2.400"/><circle cx="15.400" cy="19" r="2.400"/></g><path fill="none" stroke="#e6e8ea" stroke-width="1.300" d="M6.500 2.500c-2 1.500-2.500 5 .5 6.500 1 .4 2 .3 2.800-.2M7.300 4.200v2.300"/></svg>
  <div class="t" id="d-drag" style="left:721.67px;top:833.01px;font-size:13.00px;line-height:20px;font-style:italic;color:#69727d;transform:scaleX(0.9642);transform-origin:0 50%">Drag widget here</div>

  <!-- scrollbar -->
  <div class="abs" style="left:1539px;top:0;width:15px;height:913px;background:#fcfcfc"></div>
  <div class="abs" style="left:1542px;top:18px;width:9px;height:825px;border-radius:4.500px;background:#8b8b8b"></div>
  <svg class="abs" style="left:1541.800px;top:6px" width="9.400" height="5.200" viewBox="0 0 9.400 5.200"><path fill="#8b8b8b" d="M0 5.200L4.700 0l4.700 5.200z"/></svg>
  <svg class="abs" style="left:1541.800px;top:900.800px" width="9.400" height="5.200" viewBox="0 0 9.400 5.200"><path fill="#8b8b8b" d="M0 0h9.400L4.700 5.200z"/></svg>
<!--PREVIEW-END-->
</div>

<!--OVERLAY-START-->
<!-- collapse handle -->
<div class="abs" style="left:300px;top:480px;width:15px;height:50px;background:#1f2124;box-shadow:1px 0 3px rgba(0,0,0,.15)"></div>
<svg class="abs" style="left:304px;top:500px" width="8" height="10" viewBox="0 0 8 10"><path fill="none" stroke="#d5d8dc" stroke-width="1.300" d="M5.800 1L1.800 5l4 4"/></svg>
<!-- annotations -->
<svg class="abs" style="left:0;top:0;pointer-events:none" width="1854" height="961" viewBox="0 0 1854 961">
  <rect x="10" y="173" width="283" height="535" rx="1" fill="none" stroke="#ff0000" stroke-width="4"/>
  <rect x="384" y="321.500" width="295" height="137.500" rx="1" fill="none" stroke="#ff0000" stroke-width="4"/>
  <path d="M295.500 584L466 472.600" stroke="#ff0000" stroke-width="4" fill="none"/>
  <path d="M481 462.500L459.500 464.500L468.500 479.500z" fill="#ff0000"/>
</svg>
<!--OVERLAY-END-->
</div>
</body>
</html>
